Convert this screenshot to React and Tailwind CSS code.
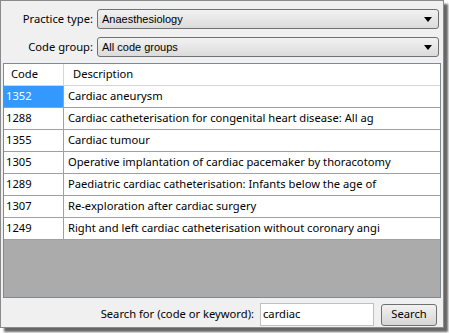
const rows = [
  ['1352', 'Cardiac aneurysm'],
  ['1288', 'Cardiac catheterisation for congenital heart disease: All ag'],
  ['1355', 'Cardiac tumour'],
  ['1305', 'Operative implantation of cardiac pacemaker by thoracotomy'],
  ['1289', 'Paediatric cardiac catheterisation: Infants below the age of'],
  ['1307', 'Re-exploration after cardiac surgery'],
  ['1249', 'Right and left cardiac catheterisation without coronary angi'],
];

function Select({ value }) {
  return (
    <div className="flex-1 h-[20px] flex items-center justify-between rounded-[3px] border border-[#707070] bg-gradient-to-b from-[#f2f2f2] to-[#dbdbdb] pl-[4px] pr-[6px] font-['Liberation_Sans',sans-serif] text-[11px] text-black">
      <span>{value}</span>
      <svg width="8" height="5" viewBox="0 0 8 5">
        <path d="M0 0h8L4 5z" fill="#000" />
      </svg>
    </div>
  );
}

export default function App() {
  return (
    <div className="w-[449px] h-[333px] bg-white font-['Noto_Sans',sans-serif]">
      <div className="w-[444px] h-[328px] flex flex-col border border-[#8a8a8a] bg-[#f0f0f0] shadow-[4px_4px_2px_rgba(0,0,0,0.6)]">
        <div className="flex flex-col gap-[8px] pt-[8px] pr-[4px]">
          <div className="flex items-center gap-[4px]">
            <span className="w-[92px] text-right text-[11.2px] text-black">Practice type:</span>
            <Select value="Anaesthesiology" />
          </div>
          <div className="flex items-center gap-[4px]">
            <span className="w-[92px] text-right text-[11.2px] text-black">Code group:</span>
            <Select value="All code groups" />
          </div>
        </div>

        <div className="mx-[2px] mt-[6px] h-[235px] flex flex-col border border-[#828790] bg-[#ababab] text-[11.2px]">
          <div className="flex h-[22px] bg-white border-b border-[#d5d5d5] text-black">
            <div className="w-[60px] pl-[7px] flex items-center border-r border-[#d5d5d5]">Code</div>
            <div className="flex-1 pl-[9px] flex items-center">Description</div>
          </div>
          {rows.map(([code, desc], i) => (
            <div key={code} className="flex h-[22px] bg-white border-b border-[#a0a0a0] text-black">
              <div
                className={`w-[60px] pl-[2px] flex items-center border-r border-[#a0a0a0] ${
                  i === 0 ? 'bg-[#3399ff] text-white' : ''
                }`}
              >
                {code}
              </div>
              <div className="flex-1 pl-[4px] flex items-center whitespace-nowrap overflow-hidden">{desc}</div>
            </div>
          ))}
        </div>

        <div className="flex items-center justify-end gap-[6px] pr-[6px] mt-[5px]">
          <span className="text-[11.2px] text-black">Search for (code or keyword):</span>
          <div className="w-[114px] h-[23px] flex items-center border border-[#c0c0c0] bg-white pl-[2px] text-[11.2px]">
            cardiac
          </div>
          <div className="w-[56px] h-[22px] ml-[1px] flex items-center justify-center rounded-[3px] border border-[#707070] bg-gradient-to-b from-[#f2f2f2] to-[#d5d5d5] text-[11.2px]">
            Search
          </div>
        </div>
      </div>
    </div>
  );
}
